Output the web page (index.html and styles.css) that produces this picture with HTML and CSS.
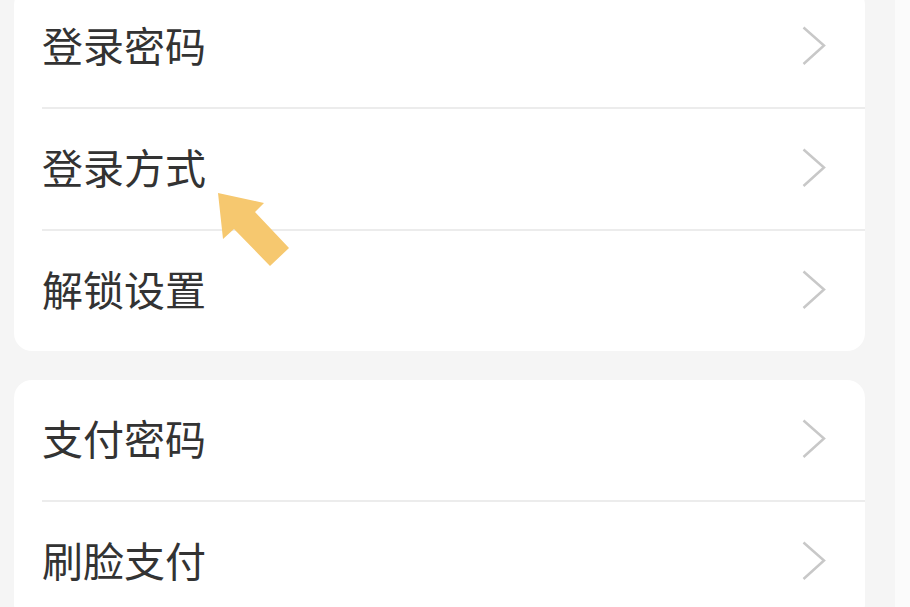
FILE: index.html
```html
<!DOCTYPE html>
<html lang="zh-CN">
<head>
  <meta charset="UTF-8">
  <meta name="viewport" content="width=device-width, initial-scale=1.0">
  <title>账号与安全</title>
  <link rel="stylesheet" href="styles.css">
</head>
<body>
  <div class="page">
    <!-- 登录相关 -->
    <ul class="card card-first">
      <li class="row">
        <span class="label">登录密码</span>
        <svg class="chevron" width="24" height="40" viewBox="0 0 24 40"><polyline points="1.5,1.5 22,19.5 1.5,38"/></svg>
      </li>
      <li class="row">
        <span class="label">登录方式</span>
        <svg class="chevron" width="24" height="40" viewBox="0 0 24 40"><polyline points="1.5,1.5 22,19.5 1.5,38"/></svg>
      </li>
      <li class="row">
        <span class="label">解锁设置</span>
        <svg class="chevron" width="24" height="40" viewBox="0 0 24 40"><polyline points="1.5,1.5 22,19.5 1.5,38"/></svg>
      </li>
    </ul>

    <!-- 支付相关 -->
    <ul class="card">
      <li class="row">
        <span class="label">支付密码</span>
        <svg class="chevron" width="24" height="40" viewBox="0 0 24 40"><polyline points="1.5,1.5 22,19.5 1.5,38"/></svg>
      </li>
      <li class="row">
        <span class="label">刷脸支付</span>
        <svg class="chevron" width="24" height="40" viewBox="0 0 24 40"><polyline points="1.5,1.5 22,19.5 1.5,38"/></svg>
      </li>
    </ul>
  </div>

  <!-- 指示箭头 -->
  <svg class="pointer" width="910" height="607" viewBox="0 0 910 607">
    <polygon points="218,193 264,203 255,212 289,248 270,266 234,229 223,239" fill="#f6c86f"/>
  </svg>
</body>
</html>
```

FILE: styles.css
```css
* {
  padding: 0;
  margin: 0;
  list-style: none;
  box-sizing: border-box;
}

body {
  width: 910px;
  height: 607px;
  overflow: hidden;
  background: linear-gradient(to right, #f5f5f5 895px, #fbfbfb 895px);
  font-family: "Noto Sans CJK SC", "Noto Sans", sans-serif;
  position: relative;
}

.page {
  display: flex;
  flex-direction: column;
  gap: 29px;
  width: 851px;
  margin-left: 14px;
}

.card {
  background-color: #fff;
  border-radius: 18px;
  padding-left: 28px;
  overflow: hidden;
}

.card-first {
  margin-top: -13px;
}

.row {
  display: flex;
  align-items: center;
  justify-content: space-between;
  height: 122px;
  padding-right: 39px;
  border-bottom: 2px solid #ececec;
}

.row:last-child {
  border-bottom: none;
  height: 120px;
}

.label {
  font-size: 41px;
  color: #333;
  line-height: 1;
  margin-bottom: 6px;
}

.chevron {
  display: block;
  margin-bottom: 2px;
}

.chevron polyline {
  fill: none;
  stroke: #c8c8c8;
  stroke-width: 2.5;
}

.pointer {
  position: absolute;
  left: 0;
  top: 0;
}
```
